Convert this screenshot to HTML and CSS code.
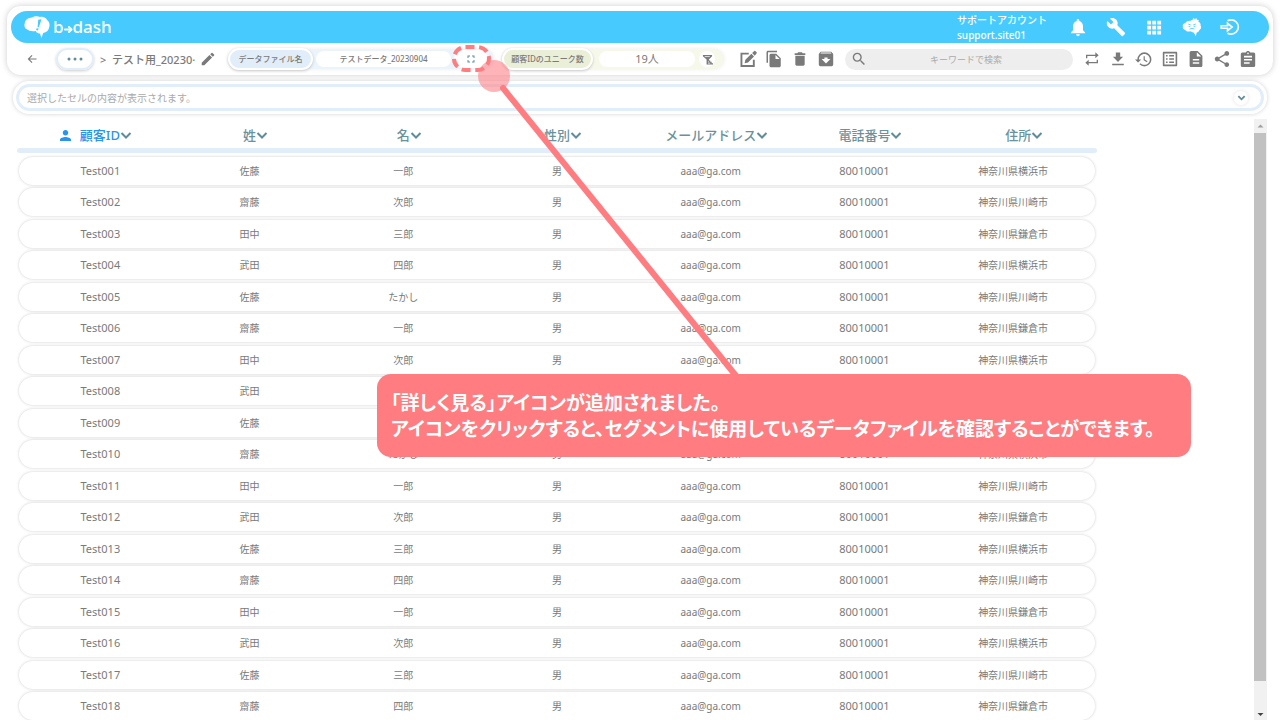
FILE: index.html
```html
<!DOCTYPE html>
<html lang="ja">
<head>
    <meta charset="UTF-8">
    <meta name="viewport" content="width=device-width, initial-scale=1.0">
    <title>b→dash</title>
    <link rel="stylesheet" href="styles.css">
</head>
<body>
    <header class="header">
        <div class="nav">
            <a class="logo" href="#" aria-label="b→dash">
                <svg class="logo-mark" viewBox="0 0 26 22"><path fill="#fff" d="M8 1.500C10 .2 14 -.2 16 1c3-.7 6 .5 7.300 3.200 2.400 1.600 2.700 5 1.800 7.300-.3 3-2.800 5-5.900 5.500l-1.800 5-1.400-4.600c-2 .3-3.600-.9-4.300-2.400-3.500.8-7 0-8.800-1.700C.5 12.300 0 9.500.8 7 1.300 3.800 4 1.700 8 1.500z"/><path fill="#47cbff" d="M14.200 3.800l3.300-.5-2.600 8-1.300 0zM12.600 12.300l2 .3-.6 1.900-2-.4z"/></svg>
                <span>b</span>
                <svg class="logo-arrow" viewBox="0 0 10 10"><path d="M1 5h7M5.500 2.200L8.500 5 5.500 7.800" fill="none" stroke="#fff" stroke-width="2" stroke-linecap="round" stroke-linejoin="round"/></svg>
                <span>dash</span>
            </a>
            <div class="account">サポートアカウント<br>support.site01</div>
            <div class="nav-icons">
                <button aria-label="通知"><svg viewBox="0 0 24 24"><path d="M12 23c1.300 0 2.300-.9 2.300-2.200H9.700c0 1.300 1 2.200 2.300 2.200zm6-7v-5c0-3.100-1.600-5.600-4.500-6.300V4c0-.9-.7-1.500-1.500-1.500s-1.500.6-1.500 1.500v.7C7.600 5.400 6 7.900 6 11v5l-2.500 2.500v1h17v-1L18 16z"/></svg></button>
                <button aria-label="設定"><svg viewBox="0 0 24 24"><path d="M22.700 19l-9.100-9.100c.9-2.300.4-5-1.500-6.900-2-2-5-2.400-7.400-1.300L9 6 6 9 1.600 4.700C.4 7.100.9 10.100 2.900 12.100c1.900 1.900 4.600 2.400 6.900 1.500l9.100 9.100c.4.4 1 .4 1.400 0l2.300-2.300c.5-.4.5-1.100.1-1.400z"/></svg></button>
                <button aria-label="アプリ"><svg viewBox="0 0 24 24"><path d="M4 4.500h4.500V9H4zM10 4.500h4.500V9H10zM16 4.500h4.500V9H16zM4 10.500h4.500V15H4zM10 10.500h4.500V15H10zM16 10.500h4.500V15H16zM4 16.500h4.500V21H4zM10 16.500h4.500V21H10zM16 16.500h4.500V21H16z"/></svg></button>
                <button aria-label="サポート"><svg viewBox="0 0 24 24"><path d="M13 3l1-2 1.300 1.800 2-1.500.5 1.900 2.500.3-.8 1.800c2 1.200 3.300 3 2.800 5.200 1.300 1.500.6 4-1.200 4.700-.5 1.900-2 3-3.500 3.300l-1 4.500-2.500-4.500c-1.500.2-2.500-.4-3.300-1.400-3 1-6 .2-6.800-1.500-2-.5-3.500-2.300-3-4C.3 9.500 2 7.500 4 7.300 5.500 4.800 8.500 4 10.500 4.500z"/><path class="face" d="M7.500 8.500l3 1M16.500 8.500l-3 1M8 11.300h2M14 11.300h2M9 14.500q3-1.800 6 0"/></svg></button>
                <button aria-label="ログアウト"><svg viewBox="0 0 24 24" class="line"><path d="M9 4.500C11 3.500 12 3.500 13.500 3.500a8.500 8.500 0 0 1 0 17c-1.500 0-2.500 0-4.500-1"/><path d="M1.500 10.500H9V7.500l5.500 4.500L9 16.500v-3H1.500z"/></svg></button>
            </div>
        </div>
        <div class="toolbar">
            <button class="back" aria-label="戻る"><svg viewBox="0 0 24 24"><path d="M21 11H7.400l5.500-5.500L11.300 4l-8 8 8 8 1.600-1.500L7.400 13H21z"/></svg></button>
            <button class="more" aria-label="メニュー"><svg viewBox="0 0 16 4"><circle cx="2" cy="2" r="1.500"/><circle cx="8" cy="2" r="1.500"/><circle cx="14" cy="2" r="1.500"/></svg></button>
            <div class="title">&gt;&nbsp;&nbsp;テスト用_20230·</div>
            <button class="rename" aria-label="名前を編集"><svg viewBox="2 2 20 20"><path d="M3 17.250V21h3.750L17.810 9.940l-3.750-3.750L3 17.250zM20.710 7.040a1 1 0 0 0 0-1.410l-2.340-2.340a1 1 0 0 0-1.410 0l-1.830 1.830 3.750 3.750 1.830-1.830z"/></svg></button>
            <div class="group group-file">
                <span class="group-label">データファイル名</span>
                <span class="group-value">テストデータ_20230904</span>
                <button class="expand" aria-label="詳しく見る"><svg viewBox="4 4 16 16"><path d="M7 14H5v5h5v-2H7v-3zm-2-4h2V7h3V5H5v5zm12 7h-3v2h5v-5h-2v3zM14 5v2h3v3h2V5h-5z"/></svg></button>
            </div>
            <div class="group group-count">
                <span class="group-label">顧客IDのユニーク数</span>
                <span class="group-value">19人</span>
                <button class="filter" aria-label="絞り込み"><svg viewBox="0 0 12 12"><path d="M1 1h10v1.500L7.500 6v1H9v1.500h1.500V10H12v1.500H5V6L1 2.500z"/><path d="M3 2.800h5.500M6.500 8.500h1M6.500 10h2.500" stroke="#fff" stroke-width=".8" fill="none"/></svg></button>
            </div>
            <div class="tools">
                <button class="big" aria-label="編集"><svg viewBox="0 0 24 24"><path d="M2 3.500h11V6H4.500v14h14v-7H21v9.500H2z"/><path d="M7.500 17.500l1-4.500 8-8 3.500 3.500-8 8zM17.500 4L20 1.500q1-.8 2 0l1.300 1.300q.8 1 0 2L21 7.500z"/></svg></button>
                <button class="big" aria-label="コピー"><svg viewBox="0 0 24 24"><path d="M16 1H4c-1.100 0-2 .9-2 2v14h2V3h12V1zm-1 4l6 6v10c0 1.100-.9 2-2 2H7.990C6.890 23 6 22.100 6 21l.01-14c0-1.100.89-2 1.990-2h7zm-1 7h5.500L14 6.500V12z"/></svg></button>
                <button aria-label="削除"><svg viewBox="0 0 24 24"><path d="M5 20c0 1.100.9 2 2 2h10c1.100 0 2-.9 2-2V7H5v13zM20 3.500h-4L14.800 2H9.200L8 3.500H4V6h16z"/></svg></button>
                <button aria-label="アーカイブ"><svg viewBox="2 2 20 20"><path fill-rule="evenodd" d="M20.540 5.230l-1.390-1.680C18.880 3.210 18.470 3 18 3H6c-.47 0-.88.21-1.160.55L3.460 5.230C3.170 5.570 3 6.020 3 6.500V19c0 1.100.9 2 2 2h14c1.100 0 2-.9 2-2V6.500c0-.48-.17-.93-.46-1.270zM12 17.500L6.500 12H10v-2h4v2h3.500L12 17.500zM5.120 5l.81-1h12l.94 1H5.120z"/></svg></button>
            </div>
            <label class="search">
                <svg viewBox="2 2 20 20"><path d="M15.500 14h-.79l-.28-.27A6.470 6.470 0 0 0 16 9.500 6.500 6.500 0 1 0 9.500 16c1.610 0 3.090-.59 4.230-1.570l.27.28v.79l5 4.990L20.490 19l-4.990-5zm-6 0C7.010 14 5 11.990 5 9.500S7.010 5 9.500 5 14 7.010 14 9.500 11.990 14 9.500 14z"/></svg>
                <input type="text" placeholder="キーワードで検索" aria-label="キーワードで検索">
            </label>
            <div class="tools tools-right">
                <button aria-label="更新"><svg viewBox="0 0 24 24"><path d="M5 5.500h12V2l5 4.500-5 4.500V7.500H5V11H3V5.500zM19 18.500H7V22l-5-4.500L7 13v3.500h12V13h2v5.500z"/></svg></button>
                <button aria-label="ダウンロード"><svg viewBox="1 1 22 22"><path d="M19 9h-4V3H9v6H5l7 7 7-7zM4 18.500v2h16v-2z"/></svg></button>
                <button class="big" aria-label="履歴"><svg viewBox="1 0 23 23"><path d="M13 3a9 9 0 0 0-9 9H1l3.890 3.890.07.14L9 12H6c0-3.870 3.130-7 7-7s7 3.130 7 7-3.130 7-7 7c-1.930 0-3.680-.79-4.940-2.060l-1.420 1.420A8.954 8.954 0 0 0 13 21a9 9 0 0 0 0-18zm-1 5v5l4.280 2.540.72-1.210-3.500-2.080V8H12z"/></svg></button>
                <button aria-label="一覧"><svg viewBox="2 2 20 20"><path d="M19 5v14H5V5h14m1.100-2H3.900c-.5 0-.9.4-.9.9v16.200c0 .4.4.9.9.9h16.200c.4 0 .9-.5.9-.9V3.900c0-.5-.5-.9-.9-.9zM11 7h6v2h-6V7zm0 4h6v2h-6v-2zm0 4h6v2h-6zM7 7h2v2H7zm0 4h2v2H7zm0 4h2v2H7z"/></svg></button>
                <button aria-label="メモ"><svg viewBox="2 2 20 20"><path d="M14 2H6c-1.100 0-1.990.9-1.990 2L4 20c0 1.100.89 2 1.990 2H18c1.100 0 2-.9 2-2V8l-6-6zm2 16H8v-2h8v2zm0-4H8v-2h8v2zm-3-5V3.500L18.500 9H13z"/></svg></button>
                <button aria-label="共有"><svg viewBox="2 2 20 20"><path d="M18 16.080c-.76 0-1.440.3-1.960.77L8.910 12.700c.05-.23.09-.46.09-.7s-.04-.47-.09-.7l7.050-4.110c.54.5 1.250.81 2.040.81 1.660 0 3-1.340 3-3s-1.340-3-3-3-3 1.340-3 3c0 .24.04.47.09.7L8.040 9.810C7.500 9.310 6.790 9 6 9c-1.660 0-3 1.340-3 3s1.340 3 3 3c.79 0 1.500-.31 2.040-.81l7.120 4.160c-.05.21-.08.43-.08.65 0 1.610 1.310 2.920 2.920 2.920s2.920-1.310 2.920-2.920-1.310-2.920-2.920-2.920z"/></svg></button>
                <button aria-label="レポート"><svg viewBox="2 1 20 20"><path d="M19 3h-4.180C14.400 1.840 13.300 1 12 1c-1.300 0-2.400.84-2.820 2H5c-1.100 0-2 .9-2 2v14c0 1.100.9 2 2 2h14c1.100 0 2-.9 2-2V5c0-1.100-.9-2-2-2zm-7 0c.55 0 1 .45 1 1s-.45 1-1 1-1-.45-1-1 .45-1 1-1zm2 14H7v-2h7v2zm3-4H7v-2h10v2zm0-4H7V7h10v2z"/></svg></button>
            </div>
        </div>
    </header>

    <div class="cell-bar">
        <div class="cell-box">
            <input type="text" placeholder="選択したセルの内容が表示されます。" aria-label="セルの内容">
            <button aria-label="開く"><svg viewBox="0 0 10 8" class="chevron"><path d="M1.500 2L5 5.500 8.500 2"/></svg></button>
        </div>
    </div>

    <main class="content">
        <table class="data">
            <thead><tr id="head"></tr></thead>
            <tbody id="rows"></tbody>
        </table>
        <div class="scrollbar">
            <svg viewBox="0 0 13 13"><path d="M3.500 8.500h6l-3-3z" fill="#a0a0a0"/></svg>
            <div class="thumb"></div>
            <svg viewBox="0 0 13 13"><path d="M3.500 6h6l-3 3z" fill="#444"/></svg>
        </div>
    </main>

    <svg class="pointer" width="1280" height="720">
        <rect x="454" y="47" width="35" height="23" rx="11.500" fill="none" stroke="#ff7c80" stroke-width="4" stroke-dasharray="9 4.700"/>
        <line x1="503" y1="88" x2="737" y2="377" stroke="#ff7c80" stroke-width="6" stroke-linecap="round"/>
        <circle cx="494" cy="76" r="16" fill="#ff7c80" fill-opacity=".57"/>
    </svg>
    <div class="callout">「詳しく見る」アイコンが追加されました。<br>アイコンをクリックすると、セグメントに使用しているデータファイルを確認することができます。</div>

    <script>
        const columns = ['顧客ID', '姓', '名', '性別', 'メールアドレス', '電話番号', '住所'];
        const lastNames = ['佐藤', '齋藤', '田中', '武田'];
        const firstNames = ['一郎', '次郎', '三郎', '四郎', 'たかし', '一郎', '次郎', '三郎', '四郎', 'たかし',
            '一郎', '次郎', '三郎', '四郎', '一郎', '次郎', '三郎', '四郎'];
        const cities = ['横浜市', '川崎市', '鎌倉市'];

        const person = '<svg viewBox="4 4 16 16" class="person"><path d="M12 12c2.210 0 4-1.790 4-4s-1.790-4-4-4-4 1.790-4 4 1.790 4 4 4zm0 2c-2.670 0-8 1.340-8 4v2h16v-2c0-2.660-5.330-4-8-4z"/></svg>';
        const chevron = '<svg viewBox="0 0 12 10" class="chevron"><path d="M1.500 3L6 7.500 10.500 3"/></svg>';

        document.getElementById('head').innerHTML = columns.map((name, i) =>
            `<th><button>${i === 0 ? person : ''}${name}${chevron}</button></th>`
        ).join('');

        document.getElementById('rows').innerHTML = firstNames.map((first, i) => `
            <tr>
                <td class="num">Test${String(i + 1).padStart(3, '0')}</td>
                <td>${lastNames[i % 4]}</td>
                <td>${first}</td>
                <td>男</td>
                <td>aaa@ga.com</td>
                <td class="num">80010001</td>
                <td>神奈川県${cities[i % 3]}</td>
            </tr>`
        ).join('');
    </script>
</body>
</html>
```
FILE: styles.css
```css
* {
    box-sizing: border-box;
    margin: 0;
    padding: 0;
}

body {
    font-family: 'Noto Sans', 'Noto Sans CJK JP', sans-serif;
    font-size: 10px;
    color: #7a7a7a;
    background: #fff;
    height: 100vh;
    overflow: hidden;
    display: flex;
    flex-direction: column;
    padding-top: 6px;
}

button {
    font: inherit;
    color: inherit;
    border: none;
    background: none;
    cursor: pointer;
    display: flex;
    align-items: center;
    justify-content: center;
    flex-shrink: 0;
}

input {
    font: inherit;
    color: inherit;
    border: none;
    outline: none;
    background: none;
    min-width: 0;
    flex: 1;
}

svg {
    display: block;
    fill: currentColor;
}

.header {
    margin: 0 7px;
    padding: 5px 4px 0;
    background: #fff;
    border-radius: 14px;
    box-shadow: 0 0 6px rgba(0, 0, 0, 0.2);
}

.nav {
    display: flex;
    align-items: center;
    height: 32px;
    padding: 0 29px 0 13px;
    border-radius: 16px;
    background: #47cbff;
    color: #fff;
}

.logo {
    display: flex;
    align-items: center;
    color: #fff;
    font-size: 17px;
    font-weight: 500;
    line-height: 32px;
    text-decoration: none;
}

.logo-mark {
    width: 26px;
    height: 22px;
    margin-right: 3px;
}

.logo-arrow {
    width: 9px;
    height: 9px;
    margin-top: 4px;
}

.account {
    margin-left: auto;
    width: 93px;
    font-weight: 500;
    line-height: 15px;
    padding-top: 1px;
    white-space: nowrap;
}

.nav-icons {
    display: flex;
    gap: 18px;
    margin-left: 18px;
}

.nav-icons svg {
    width: 20px;
    height: 20px;
}

.nav-icons .line,
.face {
    fill: none;
    stroke: #fff;
    stroke-width: 2;
}

.nav-icons .face {
    stroke: #47cbff;
    stroke-width: 1;
}

.toolbar {
    display: flex;
    align-items: center;
    height: 32px;
    padding: 0 8px 0 15px;
}

.back svg {
    width: 12px;
    height: 12px;
}

.more {
    width: 38px;
    height: 22px;
    margin: 0 6px 0 18px;
    border: 2px solid #e1eef9;
    border-radius: 11px;
    color: #5f8d99;
    box-shadow: 0 1px 3px rgba(0, 0, 0, 0.2);
}

.more svg {
    width: 16px;
    height: 4px;
}

.title {
    width: 101px;
    font-size: 11px;
    font-weight: 500;
    white-space: nowrap;
}

.rename svg {
    width: 14px;
    height: 14px;
}

.group {
    display: flex;
    align-items: center;
    height: 20px;
    border-radius: 10px;
    font-size: 8px;
    font-weight: 500;
    box-shadow: 0 0 4px rgba(0, 0, 0, 0.08);
}

.group-file {
    margin-left: 13px;
    width: 266px;
    background: #ebf4fb;
}

.group-count {
    margin-left: 8px;
    width: 222px;
    background: #f6f8e9;
}

.group-label {
    height: 22px;
    width: 85px;
    line-height: 18px;
    text-align: center;
    border: 2px solid #fff;
    border-radius: 11px;
    background: #e1eef9;
    box-shadow: 0 1px 3px rgba(0, 0, 0, 0.2);
    white-space: nowrap;
}

.group-count .group-label {
    width: 91px;
    background: #eaefd7;
}

.group-value {
    flex: 1;
    height: 16px;
    line-height: 16px;
    margin: 0 3px;
    text-align: center;
    border-radius: 8px;
    background: #fff;
}

.group-count .group-value {
    margin: 0 4px 0 6px;
    font-size: 11px;
    font-weight: 400;
}

.expand {
    width: 34px;
    height: 18px;
    margin-right: 6px;
    border-radius: 9px;
    background: #fff;
    color: #5f8d99;
}

.expand svg {
    width: 8px;
    height: 8px;
}

.filter {
    width: 16px;
    height: 16px;
    margin-right: 9px;
    border-radius: 8px;
    background: #fff;
}

.filter svg {
    width: 11px;
    height: 11px;
}

.tools {
    display: flex;
    margin-left: 11px;
}

.tools-right {
    margin-left: 6px;
}

.tools button {
    width: 26px;
    height: 20px;
}

.tools svg {
    width: 16px;
    height: 16px;
}

.tools .big svg {
    width: 18px;
    height: 18px;
}

.search {
    flex: 1;
    display: flex;
    align-items: center;
    height: 21px;
    margin-left: 6px;
    padding: 0 7px;
    border-radius: 11px;
    background: #eee;
    min-width: 0;
}

.search svg {
    width: 14px;
    height: 14px;
}

.search input {
    font-size: 9px;
    text-align: center;
}

input::placeholder {
    color: #aaa;
    opacity: 1;
}

.cell-bar {
    margin: 6px 13px 0;
    padding: 3px;
    border-radius: 16px;
    background: #fff;
    box-shadow: 0 0 4px rgba(0, 0, 0, 0.18);
}

.cell-box {
    display: flex;
    align-items: center;
    height: 27px;
    padding: 0 13px 0 8px;
    border: 3px solid #e1eef9;
    border-radius: 14px;
}

.cell-box button {
    width: 14px;
    height: 14px;
    border-radius: 7px;
    box-shadow: 0 0 4px rgba(0, 0, 0, 0.12);
}

.cell-box .chevron {
    width: 9px;
    height: 8px;
}

.chevron {
    fill: none;
    stroke: #5f8d99;
    stroke-width: 2;
}

.content {
    flex: 1;
    min-height: 0;
    display: flex;
    justify-content: space-between;
    padding: 5px 13px 0 17px;
}

.data,
.data thead,
.data tbody {
    display: block;
}

.data {
    width: 1080px;
}

.data tr {
    display: grid;
    grid-template-columns: repeat(7, 1fr);
    align-items: center;
    margin: 0 2px;
}

.data thead tr {
    height: 29px;
}

.data thead {
    margin-bottom: 4px;
}

.data thead::after {
    content: '';
    display: block;
    height: 5px;
    border-radius: 3px;
    background: #e1eef9;
}

.data th {
    padding: 3px 0 0 12px;
    color: #6a929d;
    font-size: 13px;
    font-weight: 500;
    line-height: 20px;
}

.data th:first-child {
    padding-left: 0;
    color: #2893f2;
}

.data th button {
    margin: 0 auto;
}

.data th .chevron {
    width: 12px;
    height: 10px;
}

.person {
    width: 11px;
    height: 11px;
    margin-right: 9px;
}

.data tbody tr {
    height: 28px;
    margin-bottom: 3px;
    border-radius: 14px;
    background: #fff;
    box-shadow: 0 0 3px rgba(0, 0, 0, 0.2);
}

.data tbody tr:nth-child(even) {
    margin-bottom: 4px;
}

.data td {
    text-align: center;
    line-height: 14px;
}

.data td:first-child {
    padding-left: 9px;
}

.data td:last-child {
    padding-right: 10px;
}

.data .num {
    font-size: 11px;
}

.scrollbar {
    width: 13px;
    display: flex;
    flex-direction: column;
    background: #f1f1f1;
}

.scrollbar svg {
    width: 13px;
    height: 13px;
}

.thumb {
    flex: 1;
    margin: 1px 1px 26px 0;
    background: #c1c1c1;
}

/* annotation drawn over the screen */
.pointer {
    position: absolute;
    top: 0;
    left: 0;
    pointer-events: none;
}

.callout {
    position: absolute;
    top: 374px;
    left: 377px;
    width: 814px;
    padding: 15px 14px 16px;
    border-radius: 14px;
    background: #ff7c80;
    color: #fff;
    font-family: 'Noto Sans CJK JP', sans-serif;
    font-feature-settings: 'palt';
    font-size: 19px;
    font-weight: 700;
    line-height: 26px;
    white-space: nowrap;
}
```
